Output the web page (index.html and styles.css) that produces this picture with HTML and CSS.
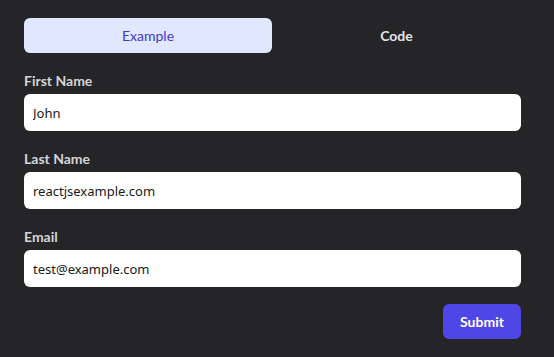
FILE: index.html
```html
<!DOCTYPE html>
<html lang="en">
<head>
  <meta charset="UTF-8">
  <meta name="viewport" content="width=device-width, initial-scale=1">
  <title>Form Example</title>
  <link rel="stylesheet" href="styles.css">
</head>
<body>

<div class="form-container">
  <div class="tabs">
    <button class="tab active">Example</button>
    <button class="tab">Code</button>
  </div>

  <form class="user-form">
    <div class="field">
      <label for="first-name">First Name</label>
      <input type="text" id="first-name" value="John">
    </div>

    <div class="field">
      <label for="last-name">Last Name</label>
      <input type="text" id="last-name" value="reactjsexample.com">
    </div>

    <div class="field">
      <label for="email">Email</label>
      <input type="email" id="email" value="test@example.com">
    </div>

    <div class="form-actions">
      <button type="submit" class="submit-btn">Submit</button>
    </div>
  </form>
</div>

</body>
</html>
```

FILE: styles.css
```css
body {
  font-family: Lato, "Noto Sans", sans-serif;
  margin: 0;
  padding: 0;
  background-color: #252527;
  color: #fff;
}

.form-container {
  width: 497px;
  padding: 18px 0 0 24px;
}

.tabs {
  display: grid;
  grid-template-columns: 248px 1fr;
  margin-bottom: 18px;
}

.tab {
  height: 35px;
  border: none;
  border-radius: 6px;
  background: none;
  color: #e4e4e7;
  font-family: Lato, "Noto Sans", sans-serif;
  font-size: 14px;
  font-weight: bold;
  cursor: pointer;
}

.tab.active {
  background-color: #e0e7ff;
  color: #4338ca;
  font-weight: normal;
}

.field {
  margin-bottom: 18px;
}

.field label {
  display: block;
  height: 20px;
  line-height: 20px;
  margin-bottom: 3px;
  font-size: 14px;
  font-weight: bold;
  color: #d4d4d8;
}

input {
  display: block;
  box-sizing: border-box;
  width: 100%;
  height: 37px;
  padding: 0 9px;
  border: none;
  border-radius: 6px;
  background-color: #fff;
  color: #18181b;
  font-family: "Noto Sans", sans-serif;
  font-size: 13px;
}

.form-actions {
  display: flex;
  justify-content: flex-end;
  margin-top: -1px;
}

.submit-btn {
  width: 78px;
  height: 35px;
  border: none;
  border-radius: 6px;
  background-color: #4f46e5;
  color: #fff;
  font-family: Lato, "Noto Sans", sans-serif;
  font-size: 14px;
  font-weight: bold;
  cursor: pointer;
}
```
